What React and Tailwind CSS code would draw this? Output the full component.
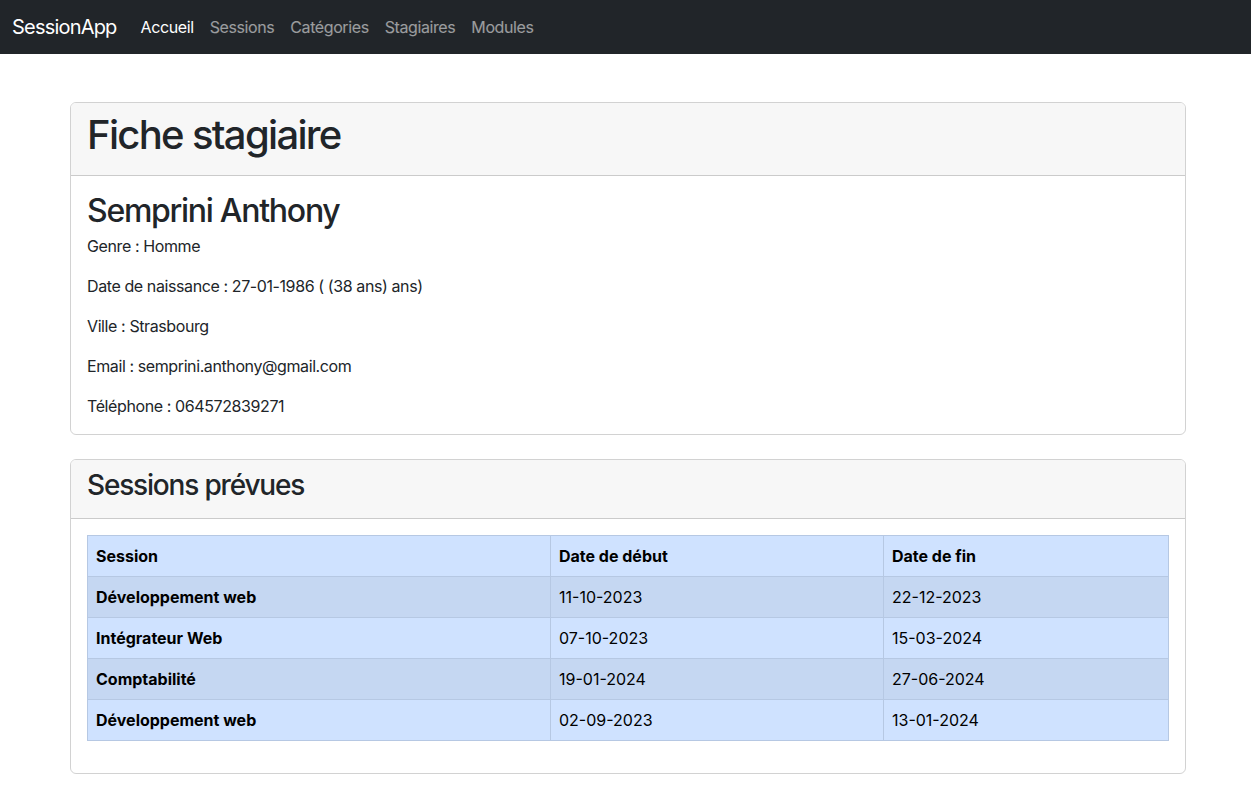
const NAV_LINKS = [
  { label: "Accueil", active: true },
  { label: "Sessions" },
  { label: "Catégories" },
  { label: "Stagiaires" },
  { label: "Modules" },
];

const INFOS = [
  "Genre : Homme",
  "Date de naissance : 27-01-1986 ( (38 ans) ans)",
  "Ville : Strasbourg",
  "Email : semprini.anthony@gmail.com",
  "Téléphone : 064572839271",
];

const SESSIONS = [
  { name: "Développement web", start: "11-10-2023", end: "22-12-2023" },
  { name: "Intégrateur Web", start: "07-10-2023", end: "15-03-2024" },
  { name: "Comptabilité", start: "19-01-2024", end: "27-06-2024" },
  { name: "Développement web", start: "02-09-2023", end: "13-01-2024" },
];

function Navbar() {
  return (
    <nav className="h-[54px] bg-[#212529] flex items-center px-3">
      <span className="text-white text-[20px] leading-[30px] tracking-[-0.04em] mr-4">SessionApp</span>
      <ul className="flex items-center">
        {NAV_LINKS.map((l) => (
          <li key={l.label}>
            <a
              href="#"
              className={`block px-2 text-[16px] leading-6 tracking-[-0.025em] ${
                l.active ? "text-white" : "text-white/55"
              }`}
            >
              {l.label}
            </a>
          </li>
        ))}
      </ul>
    </nav>
  );
}

function Card({ header, children }) {
  return (
    <section className="border border-black/[0.175] rounded-[6px] overflow-hidden">
      <div className="bg-[#f7f7f7] border-b border-black/[0.175] px-4 py-2">{header}</div>
      <div className="px-4 py-4">{children}</div>
    </section>
  );
}

export default function App() {
  return (
    <div
      className="min-h-screen bg-white text-[#212529]"
      style={{ fontFamily: "Inter, 'Liberation Sans', sans-serif" }}
    >
      <Navbar />

      <main className="w-[1116px] ml-[70px] pt-12 flex flex-col gap-6">
        {/* Fiche */}
        <Card
          header={
            <h1 className="text-[40px] leading-[48px] font-medium tracking-[-0.042em] mb-2">
              Fiche stagiaire
            </h1>
          }
        >
          <h2 className="text-[32px] leading-[38px] font-medium tracking-[-0.04em] mb-1">
            Semprini Anthony
          </h2>
          <div className="flex flex-col gap-4">
            {INFOS.map((t) => (
              <p key={t} className="text-[16px] leading-6 tracking-[-0.025em]">{t}</p>
            ))}
          </div>
        </Card>

        {/* Sessions */}
        <Card
          header={
            <h3 className="text-[28px] leading-[34px] font-medium tracking-[-0.042em] mb-2">
              Sessions prévues
            </h3>
          }
        >
          <table className="w-full border-collapse text-black text-[16px] leading-6 mb-4">
            <thead>
              <tr className="bg-[#cfe2ff]">
                <th className="w-[463px] text-left font-bold px-2 py-2 border border-[#b6c8e3]">Session</th>
                <th className="w-[333px] text-left font-bold px-2 py-2 border border-[#b6c8e3]">Date de début</th>
                <th className="text-left font-bold px-2 py-2 border border-[#b6c8e3]">Date de fin</th>
              </tr>
            </thead>
            <tbody>
              {SESSIONS.map((s, i) => (
                <tr key={i} className={i % 2 === 0 ? "bg-[#c5d7f2]" : "bg-[#cfe2ff]"}>
                  <th className="text-left font-bold px-2 py-2 border border-[#b6c8e3]">{s.name}</th>
                  <td className="px-2 py-2 border border-[#b6c8e3]">{s.start}</td>
                  <td className="px-2 py-2 border border-[#b6c8e3]">{s.end}</td>
                </tr>
              ))}
            </tbody>
          </table>
        </Card>
      </main>
    </div>
  );
}
